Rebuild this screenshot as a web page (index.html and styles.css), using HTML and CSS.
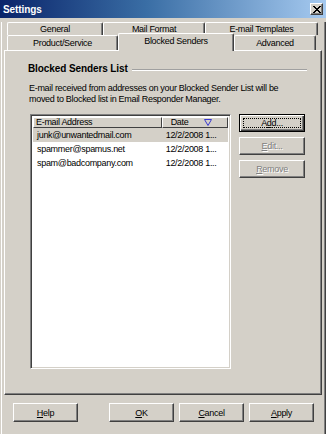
FILE: index.html
```html
<!DOCTYPE html>
<html lang="en">
<head>
	<meta charset="UTF-8">
	<meta name="viewport" content="width=device-width, initial-scale=1.0">
	<title>Settings</title>

	<link rel="stylesheet" href="styles.css">
</head>
<body>
	<div class="titlebar">
		<span class="title">Settings</span>
		<span class="close">
			<svg width="8" height="7" viewBox="0 0 8 7"><path d="M0 0 L7 7 M1 0 L8 7 M7 0 L0 7 M8 0 L1 7" stroke="#000" stroke-width="1"/></svg>
		</span>
	</div>

	<div class="dialog">
		<div class="tabs">
			<div class="tab-row back">
				<div class="tab tab-general">General</div>
				<div class="tab tab-format">Mail Format</div>
				<div class="tab tab-templates">E-mail Templates</div>
			</div>
			<div class="tab-row front">
				<div class="tab tab-product">Product/Service</div>
				<div class="tab tab-blocked selected">Blocked Senders</div>
				<div class="tab tab-advanced">Advanced</div>
			</div>
		</div>

		<div class="panel">
			<div class="group-title">
				<span>Blocked Senders List</span>
				<span class="rule"></span>
			</div>
			<p class="desc">E-mail received from addresses on your Blocked Sender List will be<br>moved to Blocked list in Email Responder Manager.</p>

			<div class="list-area">
				<div class="listview">
					<div class="lv-header">
						<div class="col-addr">E-mail Address</div>
						<div class="col-date">
							Date
							<svg class="sort" width="8" height="7" viewBox="0 0 8 7"><path d="M0.5 0.5 H7.5 L4 6.5 Z" fill="none" stroke="#3a3ad0"/></svg>
						</div>
					</div>
					<div class="lv-row selected">
						<div class="col-addr">junk@unwantedmail.com</div>
						<div class="col-date">12/2/2008 1...</div>
					</div>
					<div class="lv-row">
						<div class="col-addr">spammer@spamus.net</div>
						<div class="col-date">12/2/2008 1...</div>
					</div>
					<div class="lv-row">
						<div class="col-addr">spam@badcompany.com</div>
						<div class="col-date">12/2/2008 1...</div>
					</div>
				</div>

				<div class="side-buttons">
					<button type="button" class="btn default">A<u>d</u>d...</button>
					<button type="button" class="btn" disabled><u>E</u>dit...</button>
					<button type="button" class="btn" disabled><u>R</u>emove</button>
				</div>
			</div>
		</div>

		<div class="footer">
			<button type="button" class="btn"><u>H</u>elp</button>
			<div class="footer-right">
				<button type="button" class="btn"><u>O</u>K</button>
				<button type="button" class="btn"><u>C</u>ancel</button>
				<button type="button" class="btn"><u>A</u>pply</button>
			</div>
		</div>
	</div>
</body>
</html>
```

FILE: styles.css
```css
* {
	box-sizing: border-box;
}
body {
	margin: 0;
	width: 326px;
	height: 434px;
	background: #d4d0c8;
	font-family: "Liberation Sans", Arial, sans-serif;
	font-size: 9px;
	letter-spacing: -0.3px;
	color: #000;
	overflow: hidden;
}

.titlebar {
	height: 18px;
	display: flex;
	align-items: center;
	justify-content: space-between;
	padding: 0 3px 0 3px;
	background: linear-gradient(to right, #0a246a, #3a6ea5 45%, #a6caf0);
}
.titlebar .title {
	color: #fff;
	font-weight: bold;
	font-size: 10px;
	letter-spacing: -0.1px;
}
.titlebar .close {
	width: 13px;
	height: 12px;
	display: flex;
	align-items: center;
	justify-content: center;
	background: #d4d0c8;
	border: 1px solid;
	border-color: #fff #404040 #404040 #fff;
	box-shadow: inset -1px -1px #808080;
}

.dialog {
	height: 416px;
	border: 1px solid;
	border-top: none;
	border-color: #d4d0c8 #404040 #404040 #d4d0c8;
	box-shadow: inset 1px 0 #fff, inset -1px -1px #808080;
	padding: 0 2px;
}

.tabs {
	margin: 4px 0 0 4px;
}
.tab-row {
	display: flex;
}
.tab-row.back {
	height: 13px;
}
.tab-row.front {
	height: 15px;
}
.tab {
	height: 100%;
	border: 1px solid;
	border-bottom: none;
	border-color: #fff #404040 #fff #fff;
	border-radius: 2px 2px 0 0;
	box-shadow: inset -1px 0 #808080;
	background: #d4d0c8;
	text-align: center;
	line-height: 12px;
}
.front .tab {
	line-height: 14px;
}
.tab-general { width: 96px; }
.tab-format { width: 102px; }
.tab-templates { width: 113px; }
.tab-product { width: 111px; }
.tab-blocked { width: 116px; }
.tab-advanced { width: 82px; }
.tab.selected {
	position: relative;
	z-index: 1;
	height: 18px;
	margin-top: -2px;
	line-height: 14px;
}

.panel {
	height: 345px;
	margin: 0 1px;
	border: 1px solid;
	border-color: #fff #404040 #404040 #fff;
	box-shadow: inset -1px -1px #808080;
	padding: 11px 14px 0 23px;
}

.group-title {
	display: flex;
	align-items: center;
	gap: 4px;
	height: 13px;
	font-size: 10px;
	font-weight: bold;
	letter-spacing: -0.1px;
}
.group-title .rule {
	flex: 1;
	margin-top: 3px;
	border-top: 1px solid #a0a0a0;
	border-bottom: 1px solid #fff;
}

.desc {
	margin: 8px 0 0 1px;
	line-height: 11px;
}

.list-area {
	display: flex;
	gap: 8px;
	margin: 9px 0 0 2px;
}
.listview {
	width: 201px;
	height: 255px;
	background: #fff;
	border: 1px solid;
	border-color: #808080 #fff #fff #808080;
	box-shadow: inset 1px 1px #404040, inset -1px -1px #d4d0c8;
	padding: 2px;
}
.lv-header {
	display: flex;
	height: 11px;
	line-height: 9px;
}
.lv-header > div {
	background: #d4d0c8;
	border: 1px solid;
	border-color: #fff #404040 #404040 #fff;
	padding-left: 2px;
}
.col-addr {
	width: 130px;
	white-space: nowrap;
}
.col-date {
	width: 67px;
	white-space: nowrap;
	padding-left: 4px;
}
.lv-header .col-date {
	display: flex;
	align-items: center;
	gap: 16px;
	padding-left: 8px;
}
.lv-row {
	display: flex;
	height: 14px;
	line-height: 14px;
}
.lv-row .col-addr {
	padding-left: 4px;
}
.lv-row.selected {
	background: #d4d0c8;
}

.side-buttons {
	display: flex;
	flex-direction: column;
	gap: 5px;
}
.btn {
	position: relative;
	width: 66px;
	height: 18px;
	padding: 0;
	font: inherit;
	letter-spacing: inherit;
	color: #000;
	background: #d4d0c8;
	border: 1px solid;
	border-color: #fff #404040 #404040 #fff;
	box-shadow: inset -1px -1px #808080;
}
.btn:disabled {
	color: #808080;
	text-shadow: 1px 1px #fff;
}
.btn.default {
	border-color: #000;
	box-shadow: inset 1px 1px #fff, inset -1px -1px #404040, inset -2px -2px #808080;
}
.btn.default::after {
	content: "";
	position: absolute;
	top: 3px;
	left: 3px;
	right: 3px;
	bottom: 3px;
	border: 1px dotted #000;
}

.footer {
	display: flex;
	justify-content: space-between;
	margin-top: 8px;
	padding: 0 9px 0 10px;
}
.footer .btn {
	width: 65px;
	height: 19px;
}
.footer-right {
	display: flex;
	gap: 5px;
}
```
